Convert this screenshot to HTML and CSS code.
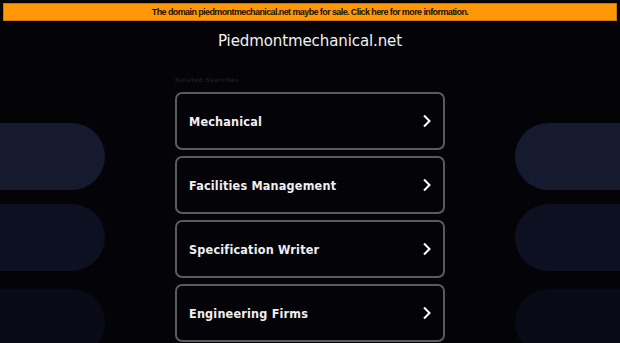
FILE: index.html
```html
<!DOCTYPE html>
<html>
<head>
    <title>Piedmontmechanical.net</title>
    <meta charset="utf-8"/>
    <link rel="stylesheet" href="styles.css">
</head>
<body>

    <div class="sale-banner">The domain piedmontmechanical.net maybe for sale. Click here for more information.</div>

    <h1 class="domain-title">Piedmontmechanical.net</h1>

    <div class="main">
        <div class="side side-left">
            <div class="pill pill-1"></div>
            <div class="pill pill-2"></div>
            <div class="pill pill-3"></div>
        </div>

        <div class="searches">
            <p class="searches-label">Related Searches</p>

            <a class="search-link" href="#">
                <span>Mechanical</span>
                <svg class="chevron" viewBox="0 0 10 14" width="10" height="14"><path d="M2 1.5 L7.5 7 L2 12.5" /></svg>
            </a>
            <a class="search-link" href="#">
                <span>Facilities Management</span>
                <svg class="chevron" viewBox="0 0 10 14" width="10" height="14"><path d="M2 1.5 L7.5 7 L2 12.5" /></svg>
            </a>
            <a class="search-link" href="#">
                <span>Specification Writer</span>
                <svg class="chevron" viewBox="0 0 10 14" width="10" height="14"><path d="M2 1.5 L7.5 7 L2 12.5" /></svg>
            </a>
            <a class="search-link" href="#">
                <span>Engineering Firms</span>
                <svg class="chevron" viewBox="0 0 10 14" width="10" height="14"><path d="M2 1.5 L7.5 7 L2 12.5" /></svg>
            </a>
        </div>

        <div class="side side-right">
            <div class="pill pill-1"></div>
            <div class="pill pill-2"></div>
            <div class="pill pill-3"></div>
        </div>
    </div>

</body>
</html>
```

FILE: styles.css
```css
body {
    background-color: #040308;
    margin: 0px;
    padding: 0px;
    font-family: "DejaVu Sans", sans-serif;
    overflow: hidden;
}

.sale-banner {
    margin: 3px 3px 0px 3px;
    height: 16px;
    line-height: 16px;
    background-color: #ff9706;
    border: 1px solid #c97705;
    color: #1a1208;
    font-family: "Liberation Sans", Arial, sans-serif;
    font-weight: bold;
    font-size: 9px;
    letter-spacing: -0.6px;
    text-align: center;
    cursor: pointer;
}

.domain-title {
    margin: 0px;
    padding-top: 8px;
    height: 25px;
    line-height: 25px;
    text-align: center;
    color: #f2f2f2;
    font-size: 15px;
    font-weight: normal;
    letter-spacing: -0.1px;
}

.main {
    display: flex;
    justify-content: space-between;
    align-items: flex-start;
}

.side {
    width: 105px;
    padding-top: 69px;
}

.pill {
    height: 67px;
    margin-bottom: 14px;
}
.pill-2 { margin-bottom: 18px; }

.side-left .pill { border-radius: 0px 34px 34px 0px; }
.side-right .pill { border-radius: 34px 0px 0px 34px; }

.pill-1 { background-color: #151a2e; }
.pill-2 { background-color: #0d1020; }
.pill-3 { background-color: #080a16; }

.searches {
    width: 270px;
}

.searches-label {
    margin: 0px;
    padding-top: 21px;
    height: 10px;
    line-height: 10px;
    margin-bottom: 7px;
    font-size: 6px;
    font-weight: bold;
    color: #1b1b24;
    letter-spacing: 0.3px;
}

.search-link {
    display: flex;
    align-items: center;
    justify-content: space-between;
    box-sizing: border-box;
    height: 58px;
    margin-bottom: 6px;
    padding: 0px 11px 0px 12px;
    border: 2px solid #5b5b5f;
    border-radius: 7px;
    color: #f0f0f0;
    text-decoration: none;
    font-family: "DejaVu Sans Condensed", "DejaVu Sans", sans-serif;
    font-stretch: condensed;
    font-size: 12.5px;
    font-weight: bold;
    letter-spacing: 0.2px;
}

.chevron path {
    fill: none;
    stroke: #ffffff;
    stroke-width: 2;
}
```
